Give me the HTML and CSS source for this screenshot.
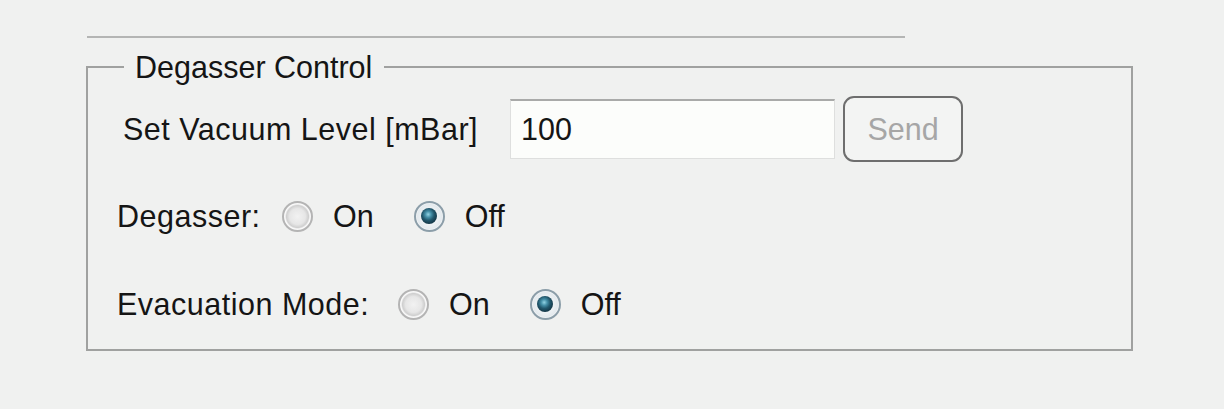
FILE: index.html
```html
<!DOCTYPE html>
<html>
<head>
<meta charset="utf-8">
<link rel="stylesheet" href="styles.css">
</head>
<body>
<div class="page">
  <div class="rule"></div>
  <fieldset class="group">
    <legend class="group-title">Degasser Control</legend>
    <div class="row row-vacuum">
      <span class="label label-vacuum">Set Vacuum Level [mBar]</span>
      <div class="textbox">100</div>
      <div class="button is-disabled">Send</div>
    </div>
    <div class="row row-degasser">
      <span class="label label-degasser">Degasser:</span>
      <span class="radio"></span><span class="opt">On</span>
      <span class="radio is-checked"></span><span class="opt">Off</span>
    </div>
    <div class="row row-evac">
      <span class="label label-evac">Evacuation Mode:</span>
      <span class="radio"></span><span class="opt">On</span>
      <span class="radio is-checked"></span><span class="opt">Off</span>
    </div>
  </fieldset>
</div>
</body>
</html>
```

FILE: styles.css
```css
html, body {
  margin: 0;
  padding: 0;
  background: #f0f1f0;
}
body {
  width: 1224px;
  height: 409px;
  overflow: hidden;
  font-family: "Liberation Sans", Arial, sans-serif;
  font-size: 30.5px;
  color: #151515;
}
.page {
  padding-top: 36px;
}
.rule {
  margin-left: 87px;
  width: 818px;
  height: 2px;
  background: #b4b5b4;
}
.group {
  margin: 11px 0 0 86px;
  width: 1047px;
  box-sizing: border-box;
  border: 2px solid #a0a1a0;
  padding: 0 0 25px 0;
  min-width: 0;
}
.group-title {
  margin-left: 36px;
  padding: 0 12px 0 11px;
  line-height: 36px;
}
.row {
  display: flex;
  align-items: center;
}
.row-vacuum {
  margin-top: 11px;
  height: 66px;
  padding-left: 35px;
}
.row-degasser {
  margin-top: 34px;
  height: 40px;
  padding-left: 29px;
}
.row-evac {
  margin-top: 48px;
  height: 40px;
  padding-left: 29px;
}
.label {
  letter-spacing: 0.5px;
  flex: none;
}
.label-vacuum {
  width: 387px;
}
.label-degasser {
  width: 165px;
}
.label-evac {
  width: 281px;
}
.textbox {
  width: 325px;
  height: 60px;
  box-sizing: border-box;
  background: #fcfdfb;
  border: 1px solid #dedfde;
  border-top: 2px solid #a9aaa9;
  padding-left: 10px;
  display: flex;
  align-items: center;
  flex: none;
}
.button {
  margin-left: 8px;
  width: 120px;
  height: 66px;
  box-sizing: border-box;
  border: 2px solid #6e6e6e;
  border-radius: 11px;
  background: #f3f4f3;
  display: flex;
  align-items: center;
  justify-content: center;
  flex: none;
}
.button.is-disabled {
  color: #a6a6a6;
}
.radio {
  width: 31px;
  height: 31px;
  box-sizing: border-box;
  border-radius: 50%;
  border: 2px solid #b4b4b4;
  background: radial-gradient(circle at 50% 50%, #f2f2f2 0, #e6e6e6 8px, #cfcfcf 11px, #fafafa 12.5px, #f4f4f4 14px);
  flex: none;
  margin-right: 20px;
  position: relative;
}
.radio.is-checked {
  border-color: #8c9ea9;
  background: radial-gradient(circle at 50% 50%, #ffffff 0, #e4eaee 12px, #f6f8f9 14px);
}
.radio.is-checked::after {
  content: "";
  position: absolute;
  left: 5.5px;
  top: 5.5px;
  width: 16px;
  height: 16px;
  border-radius: 50%;
  background: radial-gradient(circle at 45% 40%, #93d3e4 0, #4590a8 3px, #22586d 6px, #163b4c 9px);
}
.opt {
  margin-right: 40px;
}
```
